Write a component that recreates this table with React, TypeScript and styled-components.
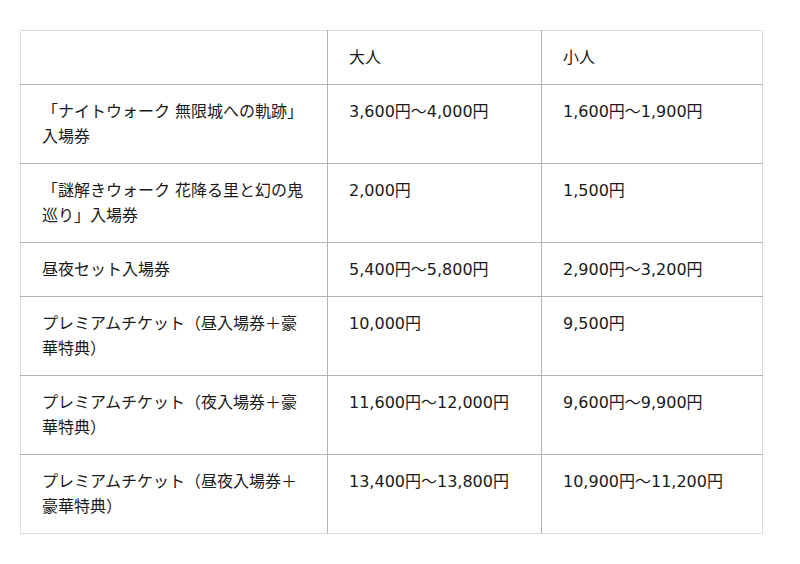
import styled, { createGlobalStyle } from 'styled-components'

const GlobalStyle = createGlobalStyle`
  body {
    margin: 0;
    background: #fff;
    font-family: "DejaVu Sans", "Noto Sans CJK JP", sans-serif;
    color: #1a1a1a;
  }
`

const Page = styled.div`
  padding: 30px 20px;
`

const PriceTable = styled.table`
  width: 742px;
  border-collapse: collapse;
  table-layout: fixed;
  border: 1px solid #dcdcdc;
  font-size: 16px;
  line-height: 25px;
`

const Col = styled.col<{ $width: number }>`
  width: ${(p) => p.$width}px;
`

const Cell = styled.td`
  box-sizing: border-box;
  padding: 14px 20px 14px 21px;
  vertical-align: top;
  text-align: left;
  border: 1px solid #b4b4b4;

  tr:first-child > & {
    border-top-color: #dcdcdc;
  }
  tr:last-child > & {
    border-bottom-color: #dcdcdc;
  }
  &:first-child {
    border-left-color: #dcdcdc;
  }
  &:last-child {
    border-right-color: #dcdcdc;
  }
`

const rows = [
  ['「ナイトウォーク 無限城への軌跡」入場券', '3,600円〜4,000円', '1,600円〜1,900円'],
  ['「謎解きウォーク 花降る里と幻の鬼巡り」入場券', '2,000円', '1,500円'],
  ['昼夜セット入場券', '5,400円〜5,800円', '2,900円〜3,200円'],
  ['プレミアムチケット（昼入場券＋豪華特典）', '10,000円', '9,500円'],
  ['プレミアムチケット（夜入場券＋豪華特典）', '11,600円〜12,000円', '9,600円〜9,900円'],
  ['プレミアムチケット（昼夜入場券＋豪華特典）', '13,400円〜13,800円', '10,900円〜11,200円'],
]

export default function App() {
  return (
    <Page>
      <GlobalStyle />
      <PriceTable>
        <colgroup>
          <Col $width={307} />
          <Col $width={214} />
          <Col $width={221} />
        </colgroup>
        <tbody>
          <tr>
            <Cell />
            <Cell>大人</Cell>
            <Cell>小人</Cell>
          </tr>
          {rows.map((r) => (
            <tr key={r[0]}>
              <Cell>{r[0]}</Cell>
              <Cell>{r[1]}</Cell>
              <Cell>{r[2]}</Cell>
            </tr>
          ))}
        </tbody>
      </PriceTable>
    </Page>
  )
}
